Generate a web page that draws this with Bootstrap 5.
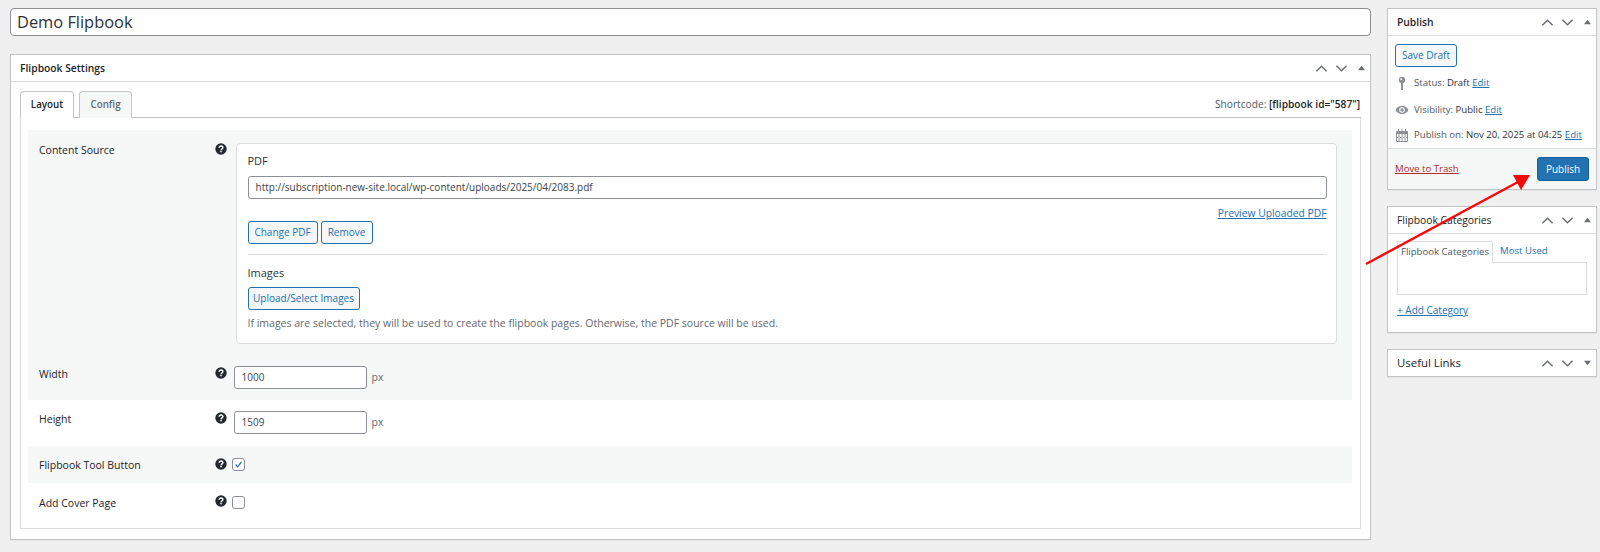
<!DOCTYPE html>
<html lang="en"><head><meta charset="utf-8"><title>Demo Flipbook</title>
<link href="https://cdn.jsdelivr.net/npm/bootstrap@5.3.0/dist/css/bootstrap.min.css" rel="stylesheet">
<style>
html,body{height:552px;overflow:hidden}
body{background:#f0f0f1;font-family:"Open Sans","Noto Sans",sans-serif;font-size:10.5px;color:#2c3338;padding:8px 3px 0 10px;position:relative;line-height:1.3}
a{color:#2271b1}
.main-col{width:1361px;margin-right:16px;flex:none}
.side-col{width:210px;flex:none;font-size:9.6px}
.title-in{height:28px;border:1px solid #8c8f94;border-radius:4px;background:#fff;font-size:16.4px;padding:0 6px;color:#2c3338;margin-bottom:18px;line-height:26px;width:100%;display:block}
.wp-box{background:#fff;border:1px solid #c3c4c7;box-shadow:0 1px 1px rgba(0,0,0,.04)}
.box-head{height:27px;border-bottom:1px solid #dcdcde;padding:0 5px 0 9px}
.box-head h2{font-size:10.3px;font-weight:600;margin:0;color:#1d2327}
.box-head h2.wider{font-size:11.4px;font-weight:500}
.box-head h2.mid{font-weight:500}
.ctl{display:flex;align-items:center;gap:7px;color:#6a6f75}
.ctl svg{display:block}
.ctl .ct{margin-left:3px}
.settings-body{padding:9px 9px 10px}
.tab-strip{height:27px;border-bottom:1px solid #c3c4c7;position:relative}
.tab-it{height:27px;border:1px solid #c3c4c7;border-bottom:0;border-radius:4px 4px 0 0;display:flex;align-items:center;justify-content:center;font-weight:600;font-size:9.8px;background:#f6f7f7;color:#646970;margin-right:5px}
.tab-it.on{background:#fff;color:#1d2327;margin-bottom:-1px;z-index:1;position:relative}
.tab-a{width:54px}.tab-b{width:53px}
.shortcode{margin-left:auto;align-self:center;font-size:10.2px;color:#50575e;padding-right:1px;padding-top:2px}
.shortcode b{font-weight:600;color:#1d2327}
.tab-panel{border:1px solid #dcdcde;border-top:0;padding:12px 8px 7px 7px;height:411px}
.opt{display:flex;padding-left:11px}
.opt.alt{background:#f6f7f7}
.opt-label{width:175.500px;font-weight:500;color:#1d2327;font-size:10.5px;flex:none;padding-top:2px}
.q{flex:none;display:block}
.r0{height:270px;flex-direction:column;padding-top:13px}
.r1{padding-left:0;height:223px}
.r1w{padding-left:0;height:34px}
.r1 .opt-label{padding-top:1px}
.r2{height:46px;padding-top:11px}
.r2 .q,.r3 .q,.r1w .q{margin-top:1px}
.r3{height:37px;padding-top:11px}
.r4{height:37px;padding-top:12px}
.src-panel{width:1101px;height:201px;border:1px solid #dcdcde;border-radius:4px;background:#fff;margin-left:9px;padding:10px 9px 0 11px}
.src-panel .cap{font-size:11px;font-weight:500;color:#2c3338;line-height:14px}
.wp-in{border:1px solid #8c8f94;border-radius:3px;background:#fff;height:23px;font-size:10px;padding:0 7px;color:#3c434a;display:block;line-height:21px}
.url-in{width:1079px;margin-top:8px}
.prev{text-align:right;margin:8px 0 0;height:14px;font-size:10.3px}
.wp-btn{height:23px;border:1px solid #2271b1;border-radius:3px;background:#f6f7f7;color:#2271b1;font-size:10px;padding:0;display:flex;align-items:center;justify-content:center}
.b-chg{width:70px}.b-rm{width:52px}.b-up{width:112px;margin-top:7px}
.btn-row{gap:3px}
.divider{border-top:1px solid #dcdcde;margin:10px 0 11px;height:0}
.hint{color:#646970;margin-top:7px;font-size:10.5px}
.num-in{width:133px;margin-left:7px}
.px{color:#646970;margin-left:5px;line-height:23px}
.chk{width:13px;height:13px;border:1px solid #8c8f94;border-radius:3px;background:#fff;margin-left:5px;margin-top:1px;display:block;flex:none}
.pub-body{padding:8px 7px 0;height:113px;border-bottom:1px solid #dcdcde}
.b-save{width:62px}
.mi{display:flex;align-items:center;color:#50575e;height:14px;white-space:nowrap}
.mi b{font-weight:500;color:#2c3338}
.mi svg{flex:none;margin-right:5px}
.m1{margin-top:9px}.m2{margin-top:13px}.m3{margin-top:11px}
.pub-foot{background:#f6f7f7;height:40px;padding:0 7px}
.trash{color:#b32d2e}
.b-pub{width:52px;height:24px;background:#2271b1;color:#fff;font-size:10px;border:1px solid #135e96;border-radius:3px;display:flex;align-items:center;justify-content:center;font-weight:500;padding:0}
.cat-body{padding:7px 9px 0;height:98px}
.cat-tab{height:21px;display:flex;align-items:center;white-space:nowrap}
.cat-tab.on{width:96px;border:1px solid #dcdcde;border-bottom:0;justify-content:center;background:#fff;color:#50575e;margin-bottom:-1px;height:22px;position:relative;z-index:1}
.cat-tab.off{margin-left:7px;color:#2271b1}
.cat-list{height:33px;border:1px solid #dcdcde}
.add-cat{display:block;margin-top:9px;font-size:10px}
.side-gap{margin-top:16px}
.head-slim{height:26px}
.arrow-over{position:absolute;left:0;top:0;pointer-events:none;z-index:5}
</style></head>
<body>
<svg width="0" height="0" class="position-absolute">
<defs>
<symbol id="up" viewBox="0 0 14 9"><path d="M1.500 7.500 7 2l5.500 5.500" fill="none" stroke="currentColor" stroke-width="1.600"/></symbol>
<symbol id="down" viewBox="0 0 14 9"><path d="M1.500 1.500 7 7l5.500-5.500" fill="none" stroke="currentColor" stroke-width="1.600"/></symbol>
<symbol id="cu" viewBox="0 0 8 6"><path d="M4 .5 8 5.500H0z" fill="currentColor"/></symbol>
<symbol id="cd" viewBox="0 0 8 6"><path d="M4 5.500 8 .5H0z" fill="currentColor"/></symbol>
<symbol id="help" viewBox="0 0 12 12"><circle cx="6" cy="6" r="5.700" fill="#23282d"/><path d="M4.200 4.800c0-1.200.8-1.800 1.900-1.800 1.100 0 1.800.6 1.800 1.500 0 1.300-1.800 1.300-1.800 2.700" fill="none" stroke="#fff" stroke-width="1.500"/><rect x="5.300" y="7.900" width="1.500" height="1.400" fill="#fff"/></symbol>
</defs>
</svg>
<div class="d-flex align-items-start">
<div class="main-col">
<div class="title-in">Demo Flipbook</div>
<div class="wp-box">
<div class="box-head d-flex align-items-center justify-content-between">
<h2>Flipbook Settings</h2>
<div class="ctl"><svg width="13" height="9"><use href="#up"/></svg><svg width="13" height="9"><use href="#down"/></svg><svg width="7" height="6" class="ct"><use href="#cu"/></svg></div>
</div>
<div class="settings-body">
<div class="tab-strip d-flex">
<div class="tab-it on tab-a">Layout</div><div class="tab-it tab-b">Config</div>
<div class="shortcode">Shortcode: <b>[flipbook id="587"]</b></div>
</div>
<div class="tab-panel">
<div class="opt alt r0">
<div class="opt r1">
<div class="opt-label">Content Source</div>
<svg class="q" width="12" height="12"><use href="#help"/></svg>
<div class="src-panel">
<div class="cap">PDF</div>
<div class="wp-in url-in">http://subscription-new-site.local/wp-content/uploads/2025/04/2083.pdf</div>
<div class="prev"><a href="#">Preview Uploaded PDF</a></div>
<div class="d-flex btn-row"><button class="wp-btn b-chg">Change PDF</button><button class="wp-btn b-rm">Remove</button></div>
<div class="divider"></div>
<div class="cap">Images</div>
<button class="wp-btn b-up">Upload/Select Images</button>
<div class="hint">If images are selected, they will be used to create the flipbook pages. Otherwise, the PDF source will be used.</div>
</div>
</div>
<div class="opt r1w">
<div class="opt-label">Width</div>
<svg class="q" width="12" height="12"><use href="#help"/></svg>
<div class="wp-in num-in">1000</div><span class="px">px</span>
</div>
</div>
<div class="opt r2">
<div class="opt-label">Height</div>
<svg class="q" width="12" height="12"><use href="#help"/></svg>
<div class="wp-in num-in">1509</div><span class="px">px</span>
</div>
<div class="opt alt r3">
<div class="opt-label">Flipbook Tool Button</div>
<svg class="q" width="12" height="12"><use href="#help"/></svg>
<svg class="chk" viewBox="0 0 13 13"><path d="M3 6.500 5.500 9.300 10 3.500" fill="none" stroke="#2271b1" stroke-width="1.500"/></svg>
</div>
<div class="opt r4">
<div class="opt-label">Add Cover Page</div>
<svg class="q" width="12" height="12"><use href="#help"/></svg>
<span class="chk"></span>
</div>
</div>
</div>
</div>
</div>
<div class="side-col">
<div class="wp-box">
<div class="box-head d-flex align-items-center justify-content-between">
<h2>Publish</h2>
<div class="ctl"><svg width="13" height="9"><use href="#up"/></svg><svg width="13" height="9"><use href="#down"/></svg><svg width="7" height="6" class="ct"><use href="#cu"/></svg></div>
</div>
<div class="pub-body">
<button class="wp-btn b-save">Save Draft</button>
<div class="mi m1"><svg width="14" height="14" viewBox="0 0 14 14"><circle cx="7" cy="4" r="3.200" fill="#8c8f94"/><circle cx="6.200" cy="3.200" r="1" fill="#fff"/><rect x="6" y="6" width="2" height="8" fill="#8c8f94"/></svg><span>Status: <b>Draft</b> <a href="#">Edit</a></span></div>
<div class="mi m2"><svg width="14" height="10" viewBox="0 0 14 10"><path d="M7 .8C3.800.8 1.400 3 .5 5c.9 2 3.300 4.200 6.500 4.200S12.600 7 13.500 5C12.600 3 10.200.8 7 .8z" fill="#8c8f94"/><circle cx="7" cy="5" r="2.800" fill="#fff"/><circle cx="7" cy="5" r="1.700" fill="#8c8f94"/></svg><span>Visibility: <b>Public</b> <a href="#">Edit</a></span></div>
<div class="mi m3"><svg width="14" height="13" viewBox="0 0 14 13"><path d="M1.500 2.500h11v10h-11z" fill="none" stroke="#8c8f94"/><path d="M1.500 3h11v2h-11zM3 0h1v3H3zM6.500 0h1v3h-1zM10 0h1v3h-1zM3.500 5v8h1V5zM6.500 5v8h1V5zM9.500 5v8h1V5zM1.500 8h11v1h-11z" fill="#8c8f94"/></svg><span>Publish on: <b>Nov 20, 2025 at 04:25</b> <a href="#">Edit</a></span></div>
</div>
<div class="pub-foot d-flex align-items-center justify-content-between">
<a href="#" class="trash">Move to Trash</a>
<button class="b-pub">Publish</button>
</div>
</div>
<div class="wp-box side-gap">
<div class="box-head d-flex align-items-center justify-content-between">
<h2 class="mid">Flipbook Categories</h2>
<div class="ctl"><svg width="13" height="9"><use href="#up"/></svg><svg width="13" height="9"><use href="#down"/></svg><svg width="7" height="6" class="ct"><use href="#cu"/></svg></div>
</div>
<div class="cat-body">
<div class="d-flex"><div class="cat-tab on">Flipbook Categories</div><div class="cat-tab off">Most Used</div></div>
<div class="cat-list"></div>
<a href="#" class="add-cat">+ Add Category</a>
</div>
</div>
<div class="wp-box side-gap">
<div class="box-head head-slim d-flex align-items-center justify-content-between border-0">
<h2 class="wider">Useful Links</h2>
<div class="ctl"><svg width="13" height="9"><use href="#up"/></svg><svg width="13" height="9"><use href="#down"/></svg><svg width="7" height="6" class="ct"><use href="#cd"/></svg></div>
</div>
</div>
</div>
</div>
<svg class="arrow-over" width="1600" height="552" viewBox="0 0 1600 552">
<path d="M1366 264 1518 182" fill="none" stroke="#f40a0a" stroke-width="2.400"/>
<path d="M1530 175 1513 175 1521 190z" fill="#f40a0a"/>
</svg>
</body></html>
